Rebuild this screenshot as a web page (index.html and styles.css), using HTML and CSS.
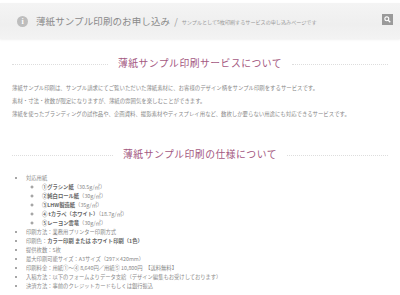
FILE: index.html
```html
<!DOCTYPE html>
<html lang="ja">
<head>
    <meta charset="UTF-8">
    <meta name="viewport" content="width=device-width, initial-scale=1.0">
    <title>薄紙サンプル印刷のお申し込み</title>
    <link rel="stylesheet" href="styles.css">
</head>
<body>
    <div class="page-header">
        <span class="info-icon">i</span>
        <h1 class="page-title">薄紙サンプル印刷のお申し込み</h1>
        <span class="sep">/</span>
        <span class="page-desc">サンプルとして5枚印刷するサービスの申し込みページです</span>
        <button class="search-btn" aria-label="検索">
            <svg width="7" height="7" viewBox="0 0 10 10">
                <circle cx="4" cy="4" r="2.8" fill="none" stroke="#fff" stroke-width="1.6"/>
                <line x1="6" y1="6" x2="9" y2="9" stroke="#fff" stroke-width="1.8"/>
            </svg>
        </button>
    </div>

    <div class="content">
        <h2 class="section-title"><span>薄紙サンプル印刷サービスについて</span></h2>
        <p>薄紙サンプル印刷は、サンプル請求にてご覧いただいた薄紙素材に、お客様のデザイン柄をサンプル印刷をするサービスです。</p>
        <p>素材・寸法・枚数が限定になりますが、薄紙の雰囲気を楽しむことができます。</p>
        <p>薄紙を使ったブランディングの試作品や、企画資料、撮影素材やディスプレイ用など、数枚しか要らない用途にも対応できるサービスです。</p>

        <h2 class="section-title second"><span>薄紙サンプル印刷の仕様について</span></h2>
        <ul class="spec">
            <li>対応用紙
                <ul>
                    <li><b>①グラシン紙</b>（30.5g/㎡）</li>
                    <li><b>②純白ロール紙</b>（30g/㎡）</li>
                    <li><b>③LHW製造紙</b>（35g/㎡）</li>
                    <li><b>④ tカラペ（ホワイト）</b>（18.7g/㎡）</li>
                    <li><b>⑤レーヨン雲竜</b>（30g/㎡）</li>
                </ul>
            </li>
            <li>印刷方法：業務用プリンター印刷方式</li>
            <li>印刷色：<b>カラー印刷 または ホワイト印刷（1色）</b></li>
            <li>提供枚数：5枚</li>
            <li>最大印刷可能サイズ：A3サイズ（297×420mm）</li>
            <li>印刷料金：用紙①～④ 8,640円／用紙⑤ 10,800円　【送料無料】</li>
            <li>入稿方法：以下のフォームよりデータ支給（デザイン編集もお受けしております）</li>
            <li>決済方法：事前のクレジットカードもしくは銀行振込</li>
        </ul>
    </div>
</body>
</html>
```

FILE: styles.css
```css
body {
    margin: 0;
    font-family: "Noto Sans CJK JP", "Noto Sans", sans-serif;
    color: #888;
    background: #fff;
}
.page-header {
    display: flex;
    align-items: center;
    margin-top: 3px;
    height: 36px;
    padding: 0 7px 0 17px;
    background: linear-gradient(#f4f4f4, #efefef 60%, #f3f3f3);
    box-shadow: 0 1px 2px rgba(0, 0, 0, 0.06);
}
.info-icon {
    width: 11px;
    height: 11px;
    border-radius: 50%;
    background: #bdbdbd;
    color: #fff;
    font: bold 8px/11px "Liberation Serif", serif;
    text-align: center;
    margin-right: 8px;
}
.page-title {
    margin: 0;
    font-family: "Liberation Serif", "Noto Sans CJK JP", serif;
    font-size: 9.5px;
    font-weight: normal;
    color: #8a8a8a;
    letter-spacing: 0.1px;
}
.sep {
    margin: 0 4px;
    font-size: 9px;
    color: #999;
}
.page-desc {
    font-size: 5.1px;
    color: #999;
}
.search-btn {
    margin-left: auto;
    margin-bottom: 4px;
    width: 11px;
    height: 11px;
    padding: 0;
    border: none;
    background: #9a9a9a;
    display: flex;
    align-items: center;
    justify-content: center;
}
.content {
    padding: 0 7px 0 12px;
}
.section-title {
    display: flex;
    align-items: center;
    gap: 10px;
    margin: 18px 5px 14px 0;
    font-family: "Liberation Serif", "Noto Sans CJK JP", serif;
    font-size: 9.8px;
    font-weight: normal;
    color: #a4587f;
    letter-spacing: 0.5px;
    line-height: 14px;
}
.section-title::before,
.section-title::after {
    content: "";
    flex: 1;
    border-top: 1px dotted #ddd;
}
.section-title.second {
    margin: 31px 5px 12px 0;
}
p {
    margin: 0 0 7px;
    font-size: 5.4px;
    line-height: 6px;
}
.spec {
    margin: 0;
    padding-left: 14px;
    font-size: 5.3px;
    line-height: 9px;
}
.spec ul {
    margin: 0;
    padding-left: 16px;
    list-style: circle;
}
.spec b {
    color: #666;
}
```
